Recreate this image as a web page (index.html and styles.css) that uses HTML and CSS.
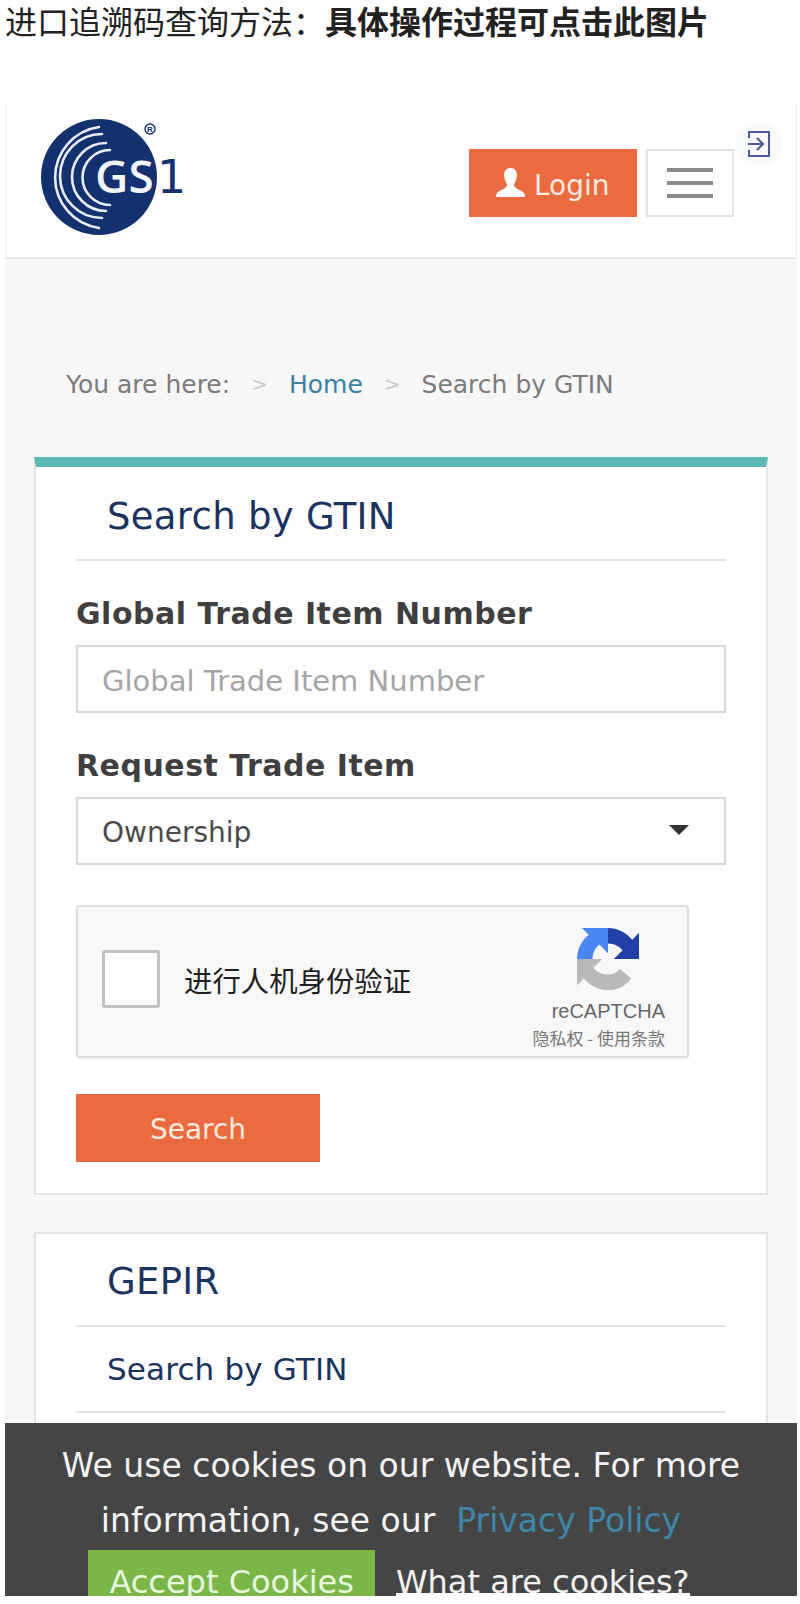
FILE: index.html
```html
<!DOCTYPE html>
<html lang="zh-CN">

<head>
	<meta charset="utf-8">
	<meta name="viewport" content="width=device-width, initial-scale=1">
	<title>进口追溯码查询方法</title>
	<link rel="stylesheet" href="styles.css">
</head>

<body>
	<p class="intro">进口追溯码查询方法：<strong>具体操作过程可点击此图片</strong></p>

	<div class="shot">
		<header class="site-header">
			<svg class="logo" viewBox="0 0 180 150">
				<circle cx="80" cy="76" r="58" fill="#14306f"></circle>
				<g fill="none" stroke="#e8edf6" stroke-width="2.6" stroke-linecap="round">
					<path d="M80,26A51 51 0 0 0 80,127"></path>
					<path d="M83,33A42 42 0 0 0 83,117"></path>
					<path d="M87,42A34 34 0 0 0 87,110"></path>
					<path d="M91,49A27 27 0 0 0 91,104"></path>
				</g>
				<text class="logo-gs" x="76" y="92">GS</text>
				<text class="logo-one" x="138" y="92">1</text>
				<circle cx="131" cy="28" r="5" fill="none" stroke="#14306f" stroke-width="1.4"></circle>
				<text class="logo-reg" x="131" y="31" text-anchor="middle">R</text>
			</svg>
			<div class="header-actions">
				<a class="login-btn">
					<svg class="person" viewBox="0 0 32 32">
						<path d="M16,1C11,1 9,5 9.500,10C10,14 11.500,16 12.500,18C12.500,21 9,22.500 5,24.500C2,26 1,28 1,31H31C31,28 30,26 27,24.500C23,22.500 19.500,21 19.500,18C20.500,16 22,14 22.500,10C23,5 21,1 16,1z" fill="#fff"></path>
					</svg>
					Login
				</a>
				<button class="menu-btn">
					<span></span>
					<span></span>
					<span></span>
				</button>
			</div>
			<div class="exit-badge">
				<svg viewBox="0 0 24 28" width="24" height="28">
					<path d="M2,8V2H22V26H2V20" fill="none" stroke="#4c5a9c" stroke-width="2"></path>
					<path d="M1,14H16M10,8l6,6l-6,6" fill="none" stroke="#4c5a9c" stroke-width="2"></path>
				</svg>
			</div>
		</header>

		<nav class="breadcrumb">
			<span>You are here:</span>
			<span class="sep">&gt;</span>
			<a>Home</a>
			<span class="sep">&gt;</span>
			<span>Search by GTIN</span>
		</nav>

		<section class="card card-accent">
			<h2>Search by GTIN</h2>
			<label class="field-label">Global Trade Item Number</label>
			<div class="field placeholder">Global Trade Item Number</div>
			<label class="field-label">Request Trade Item</label>
			<div class="field select">
				Ownership
				<i class="caret"></i>
			</div>
			<div class="captcha">
				<span class="check"></span>
				<span class="captcha-text">进行人机身份验证</span>
				<div class="captcha-brand">
					<svg class="captcha-logo" viewBox="0 0 64 64" width="62" height="62">
						<path d="M32,0C42,0 51,5 57,12L64,5V32H38L47,23C44,19 38,16 32,16z" fill="#2340a8"></path>
						<path d="M0,32C0,22 5,13 12,7L5,0H32V26L23,17C19,20 16,26 16,32z" fill="#4a87f2"></path>
						<path d="M0,32H26L17,41C20,45 26,48 32,48C37,48 41,46 44,42L56,52C50,60 42,64 32,64C22,64 13,59 7,52L0,59z" fill="#b9b9b9"></path>
					</svg>
					<span class="captcha-name">reCAPTCHA</span>
					<span class="captcha-links">隐私权 - 使用条款</span>
				</div>
			</div>
			<a class="search-btn">Search</a>
		</section>

		<section class="card card-plain">
			<h2>GEPIR</h2>
			<a class="card-link">Search by GTIN</a>
		</section>

		<aside class="cookie-bar">
			<p class="cookie-line">We use cookies on our website. For more</p>
			<p class="cookie-line cookie-line-link">
				<span>information, see our</span>
				<a class="policy">Privacy Policy</a>
			</p>
			<div class="cookie-actions">
				<a class="accept-btn">Accept Cookies</a>
				<a class="what-link">What are cookies?</a>
			</div>
		</aside>
	</div>
</body>

</html>
```

FILE: styles.css
```css
* {
	box-sizing: border-box;
}

body {
	background-color: #fff;
	font-family: "DejaVu Sans", Verdana, sans-serif;
	height: 1604px;
	margin: 0;
	overflow: hidden;
}

.intro {
	color: #222;
	font-family: "Noto Sans CJK SC", sans-serif;
	font-size: 32px;
	height: 105px;
	line-height: 38px;
	margin: 0;
	padding-left: 5px;
	padding-top: 1px;
}

.shot {
	background-color: #f7f7f7;
	display: flex;
	flex-direction: column;
	height: 1491px;
	margin: 0 3px 0 5px;
	overflow: hidden;
	position: relative;
}

.site-header {
	align-items: flex-start;
	background-color: #fff;
	border-bottom: 2px solid #e9e9e9;
	border-left: 1px solid #eee;
	border-right: 1px solid #eee;
	display: flex;
	flex-shrink: 0;
	height: 154px;
	justify-content: space-between;
	padding: 0 62px 0 13px;
	position: relative;
}

.logo {
	height: 150px;
	margin-top: -4px;
	width: 180px;
}

.logo-gs {
	fill: #f2f5fa;
	font-family: "Open Sans", sans-serif;
	font-size: 46px;
	font-weight: 600;
}

.logo-one {
	fill: #14306f;
	font-family: "DejaVu Sans", sans-serif;
	font-size: 46px;
}

.logo-reg {
	fill: #14306f;
	font-family: "Liberation Sans", sans-serif;
	font-size: 8px;
	font-weight: 700;
}

.header-actions {
	display: flex;
	gap: 9px;
	margin-top: 44px;
}

.login-btn {
	align-items: center;
	background-color: #ea6b3f;
	color: #fbe9df;
	display: flex;
	font-size: 28px;
	gap: 8px;
	height: 68px;
	padding-left: 26px;
	padding-top: 5px;
	width: 168px;
}

.person {
	height: 31px;
	margin-top: -6px;
	width: 31px;
}

.menu-btn {
	align-items: center;
	background-color: #fff;
	border: 2px solid #e3e3e3;
	display: flex;
	flex-direction: column;
	gap: 9px;
	height: 68px;
	justify-content: center;
	padding: 0;
	width: 88px;
}

.menu-btn span {
	background-color: #8c8c8c;
	display: block;
	height: 4px;
	width: 46px;
}

.exit-badge {
	align-items: center;
	background-color: #fafafa;
	border-radius: 50%;
	display: flex;
	height: 46px;
	justify-content: center;
	position: absolute;
	right: 14px;
	top: 16px;
	width: 46px;
}

.breadcrumb {
	align-items: center;
	color: #7b7b7b;
	display: flex;
	flex-shrink: 0;
	font-size: 25px;
	gap: 21px;
	height: 198px;
	padding-left: 61px;
	padding-top: 52px;
}

.breadcrumb a {
	color: #3b82a0;
}

.sep {
	color: #c9c9c9;
	font-size: 20px;
}

.card {
	background-color: #fff;
	border: 2px solid #e4e4e4;
	flex-shrink: 0;
	margin: 0 29px 0 29px;
	padding: 0 40px;
	width: 734px;
}

.card h2 {
	border-bottom: 2px solid #e2e2e2;
	color: #1b3360;
	font-size: 37px;
	font-weight: 400;
	height: 94px;
	letter-spacing: .3px;
	line-height: 100px;
	margin: 0;
	padding-left: 31px;
}

.card-accent {
	border-top: 10px solid #5bb8b4;
	height: 738px;
}

.field-label {
	color: #3f3f3f;
	display: block;
	font-size: 30px;
	font-weight: 700;
	letter-spacing: .5px;
	line-height: 40px;
	margin-bottom: 11px;
	margin-top: 33px;
}

.field {
	align-items: center;
	border: 2px solid #d8d8d8;
	color: #4a4a4a;
	display: flex;
	font-size: 28px;
	height: 68px;
	justify-content: space-between;
	padding: 3px 35px 0 24px;
}

.placeholder {
	color: #a5a5a5;
	font-size: 29px;
}

.select {
	margin-top: 11px;
}

.caret {
	border-left: 10px solid transparent;
	border-right: 10px solid transparent;
	border-top: 10px solid #333;
	margin-top: -5px;
}

.captcha {
	align-items: center;
	background-color: #f8f8f8;
	border: 2px solid #dcdcdc;
	border-radius: 4px;
	box-shadow: 0 1px 2px rgba(0, 0, 0, .08);
	display: flex;
	height: 153px;
	margin-top: 40px;
	padding: 0 22px 5px 24px;
	width: 613px;
}

.check {
	background-color: #fff;
	border: 3px solid #c1c1c1;
	border-radius: 3px;
	height: 58px;
	width: 58px;
}

.captcha-text {
	color: #1f1f1f;
	flex-grow: 1;
	font-family: "Noto Sans CJK SC", sans-serif;
	font-size: 28.400px;
	margin-left: 24px;
}

.captcha-brand {
	align-items: flex-end;
	display: flex;
	flex-direction: column;
	margin-top: 19px;
}

.captcha-logo {
	margin-right: 26px;
}

.captcha-name {
	color: #666;
	font-family: "Liberation Sans", sans-serif;
	font-size: 20px;
	margin-top: 10px;
}

.captcha-links {
	color: #777;
	font-family: "Noto Sans CJK SC", sans-serif;
	font-size: 17px;
	margin-top: 2px;
	white-space: nowrap;
}

.search-btn {
	align-items: center;
	background-color: #ea6b3f;
	color: #fbe9df;
	display: flex;
	font-size: 28px;
	height: 68px;
	justify-content: center;
	margin-top: 36px;
	padding-top: 3px;
	width: 244px;
}

.card-plain {
	flex-grow: 1;
	margin-top: 37px;
}

.card-plain h2 {
	height: 93px;
	line-height: 96px;
}

.card-link {
	border-bottom: 2px solid #e2e2e2;
	color: #1b3360;
	display: block;
	font-size: 31px;
	height: 86px;
	letter-spacing: .15px;
	line-height: 84px;
	padding-left: 31px;
}

.cookie-bar {
	background-color: #454545;
	bottom: 0;
	color: #f4f4f4;
	font-size: 33px;
	height: 173px;
	left: 0;
	overflow: hidden;
	position: absolute;
	right: 0;
}

.cookie-line {
	line-height: 55px;
	margin: 0;
	text-align: center;
}

.cookie-line:first-child {
	margin-top: 15px;
}

.cookie-line-link {
	display: flex;
	gap: 21px;
	justify-content: center;
	padding-right: 20px;
}

.policy {
	color: #3f86a8;
}

.cookie-actions {
	align-items: flex-start;
	display: flex;
	font-size: 32px;
	gap: 21px;
	justify-content: center;
	margin-top: 2px;
	padding-right: 24px;
}

.accept-btn {
	background-color: #7ab648;
	color: #eaf7df;
	height: 60px;
	line-height: 64px;
	padding: 0 21px;
}

.what-link {
	border-bottom: 3px solid #fff;
	height: 46px;
	line-height: 64px;
}
```
